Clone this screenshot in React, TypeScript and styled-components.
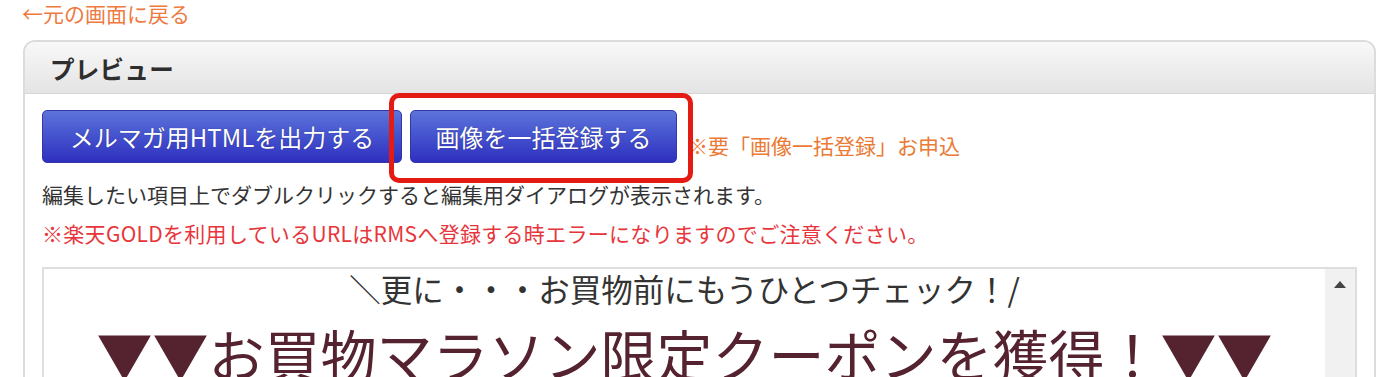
import React from "react";
import styled, { createGlobalStyle } from "styled-components";

const GlobalStyle = createGlobalStyle`
  html, body { margin: 0; padding: 0; background: #ffffff; }
  body {
    font-family: "Noto Sans CJK JP", "Noto Sans", sans-serif;
    color: #333333;
    overflow: hidden;
  }
`;

const Page = styled.div`
  padding: 0 24px 0 23px;
`;

const BackLink = styled.a`
  display: block;
  font-size: 21px;
  line-height: 24px;
  color: #ee7a3f;
  text-decoration: none;
  margin-left: -1px;
  padding-top: 1px;
  height: 39px;
`;

const Panel = styled.section`
  border: 2px solid #dcdcdc;
  border-radius: 12px 12px 0 0;
  background: #ffffff;
`;

const PanelHeader = styled.header`
  display: flex;
  align-items: center;
  padding: 1px 25px 0 25px;
  border-radius: 10px 10px 0 0;
  background: linear-gradient(#f8f8f8, #e4e4e4);
  border-bottom: 1px solid #d6d6d6;
  box-sizing: border-box;
  height: 52px;
`;

const Title = styled.h2`
  margin: 0;
  font-size: 24.5px;
  font-weight: 700;
  color: #2e2e2e;
  letter-spacing: 0.3px;
`;

const PanelBody = styled.div`
  padding: 16px 17px 0 17px;
`;

const ButtonRow = styled.div`
  position: relative;
  display: flex;
  align-items: flex-end;
  gap: 8px;
`;

const BlueButton = styled.button<{ $width: number }>`
  width: ${(p) => p.$width}px;
  height: 53px;
  padding: 0;
  border: 1px solid #3535a6;
  border-radius: 5px;
  background: linear-gradient(#5d74da 0%, #4655cf 45%, #2f2fbf 100%);
  color: #ffffff;
  font-family: "Noto Sans CJK JP", "Noto Sans", sans-serif;
  font-size: 24px;
  line-height: 1;
  text-shadow: 0 0 1px rgba(0, 0, 40, 0.5);
  cursor: pointer;
`;

const Highlight = styled.div`
  position: absolute;
  left: 347px;
  top: -17px;
  width: 304px;
  height: 90px;
  box-sizing: border-box;
  border: 5px solid #e31b12;
  border-radius: 10px;
  pointer-events: none;
`;

const Note = styled.span`
  margin-left: 2px;
  padding-bottom: 6px;
  font-size: 21px;
  line-height: 24px;
  color: #ea7a35;
`;

const Info = styled.div`
  margin-top: 12px;
  font-size: 21px;
  line-height: 39px;
`;

const InfoLine = styled.p<{ $tone?: "warn" }>`
  margin: 0;
  color: ${(p) => (p.$tone === "warn" ? "#e7363b" : "#333333")};
  letter-spacing: ${(p) => (p.$tone === "warn" ? "0.3px" : "0")};
`;

const PreviewBox = styled.div`
  margin-top: 14px;
  height: 320px;
  border: 2px solid #dedede;
  display: flex;
  overflow: hidden;
`;

const PreviewContent = styled.div`
  flex: 1;
  text-align: center;
  color: #333333;
`;

const SubCopy = styled.div`
  font-size: 31.5px;
  line-height: 38px;
`;

const HeadCopy = styled.div`
  margin-top: 10px;
  font-size: 56px;
  line-height: 72px;
  color: #55222f;
  white-space: nowrap;
`;

const Scrollbar = styled.div`
  width: 30px;
  background: #f1f1f1;
  display: flex;
  justify-content: center;
  padding-top: 12px;
  box-sizing: border-box;
`;

const ArrowUp = styled.div`
  width: 0;
  height: 0;
  border-left: 6px solid transparent;
  border-right: 6px solid transparent;
  border-bottom: 7px solid #444444;
`;

export default function App() {
  return (
    <>
      <GlobalStyle />
      <Page>
        <BackLink href="#">←元の画面に戻る</BackLink>
        <Panel>
          <PanelHeader>
            <Title>プレビュー</Title>
          </PanelHeader>
          <PanelBody>
            <ButtonRow>
              <BlueButton $width={360}>メルマガ用HTMLを出力する</BlueButton>
              <BlueButton $width={267}>画像を一括登録する</BlueButton>
              <Note>※要「画像一括登録」お申込</Note>
              <Highlight />
            </ButtonRow>
            <Info>
              <InfoLine>編集したい項目上でダブルクリックすると編集用ダイアログが表示されます。</InfoLine>
              <InfoLine $tone="warn">
                ※楽天GOLDを利用しているURLはRMSへ登録する時エラーになりますのでご注意ください。
              </InfoLine>
            </Info>
            <PreviewBox>
              <PreviewContent>
                <SubCopy>＼更に・・・お買物前にもうひとつチェック！/</SubCopy>
                <HeadCopy>▼▼お買物マラソン限定クーポンを獲得！▼▼</HeadCopy>
              </PreviewContent>
              <Scrollbar>
                <ArrowUp />
              </Scrollbar>
            </PreviewBox>
          </PanelBody>
        </Panel>
      </Page>
    </>
  );
}
